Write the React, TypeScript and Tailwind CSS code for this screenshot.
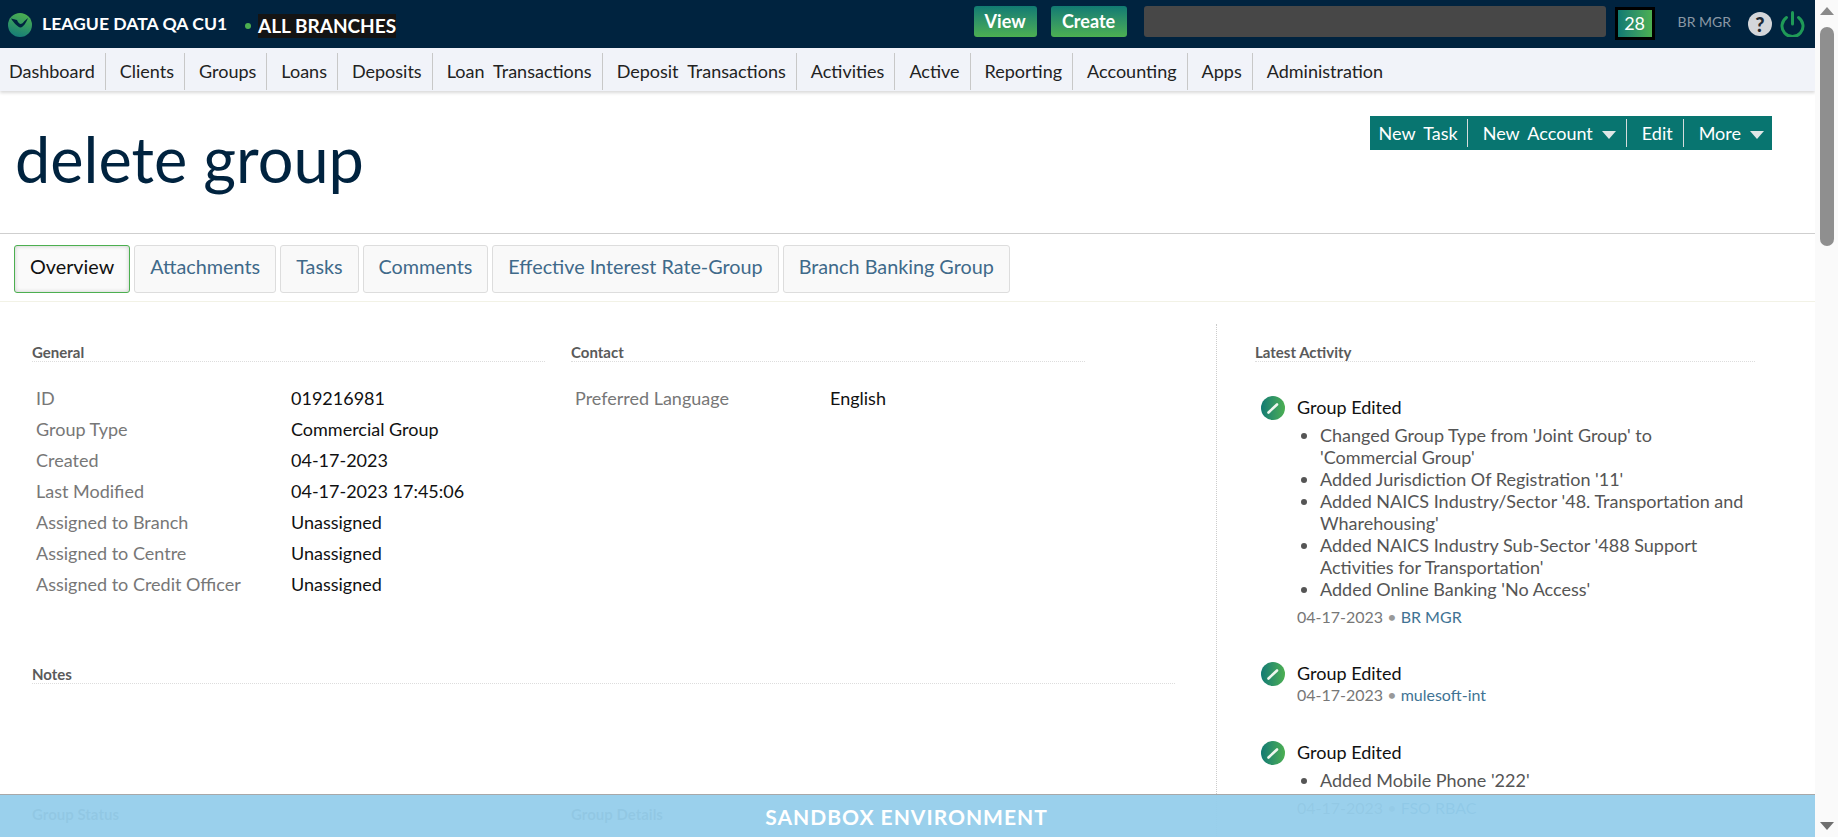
import React from "react";

const nav = ["Dashboard", "Clients", "Groups", "Loans", "Deposits", "Loan Transactions", "Deposit Transactions", "Activities", "Active", "Reporting", "Accounting", "Apps", "Administration"];
const tabs = ["Attachments", "Tasks", "Comments", "Effective Interest Rate-Group", "Branch Banking Group"];
const general: [string, string][] = [
  ["ID", "019216981"],
  ["Group Type", "Commercial Group"],
  ["Created", "04-17-2023"],
  ["Last Modified", "04-17-2023 17:45:06"],
  ["Assigned to Branch", "Unassigned"],
  ["Assigned to Centre", "Unassigned"],
  ["Assigned to Credit Officer", "Unassigned"],
];

function Caret() {
  return <span className="mt-[3px] ml-[9px] inline-block h-0 w-0 border-x-[7px] border-t-[8px] border-x-transparent border-t-[#dfe6e6] align-middle" />;
}

function SectionTitle({ children, className = "" }: { children: React.ReactNode; className?: string }) {
  return (
    <div className={`h-[19px] border-b border-dotted border-[#dddddd] text-[15px] leading-[18px] font-bold text-[#5a5a5a] ${className}`}>{children}</div>
  );
}

function EditBadge() {
  return (
    <span className="flex h-6 w-6 shrink-0 items-center justify-center rounded-full bg-gradient-to-r from-[#107a72] to-[#4caf50]">
      <svg width="14" height="14" viewBox="0 0 14 14">
        <path d="M2.5 11.5 L11 3.5" stroke="#eef6ee" strokeWidth="2.6" strokeLinecap="round" />
      </svg>
    </span>
  );
}

function Activity({ items, date, user, mt }: { items?: string[]; date: string; user: string; mt: string }) {
  return (
    <div className={`flex gap-3 pl-[6px] ${mt}`}>
      <EditBadge />
      <div className="min-w-0 flex-1">
        <div className="-mt-px text-[18px] leading-6 text-[#111111]">Group Edited</div>
        {items && (
          <ul className="mt-[5px] list-disc pl-[23px] text-[18px] leading-[22px] text-[#555555]">
            {items.map((t) => (
              <li key={t}>{t}</li>
            ))}
          </ul>
        )}
        <div className={`${items ? "mt-[7px]" : "mt-0"} text-[16px] leading-5 text-[#777777]`}>
          {date} <span className="text-[#999999]">•</span> <span className="text-[#3f7394]">{user}</span>
        </div>
      </div>
    </div>
  );
}

export default function App() {
  return (
    <div className="flex h-[837px] w-[1838px] overflow-hidden bg-white [font-family:Lato,'Noto_Sans',sans-serif]">
      <div className="relative h-full w-[1815px] shrink-0 overflow-hidden">
        <header className="flex h-12 items-center bg-[#00233f]">
          <svg className="mt-[1px] ml-2 shrink-0" width="24" height="24" viewBox="0 0 24 24">
            <defs>
              <linearGradient id="lg" x1="0.6" y1="0" x2="0.3" y2="1">
                <stop offset="0" stopColor="#4caf50" />
                <stop offset="1" stopColor="#157c78" />
              </linearGradient>
            </defs>
            <circle cx="12" cy="12" r="12" fill="url(#lg)" />
            <path d="M3 5.5 C6 10 9.5 14 12.5 14.5 C15.5 14 18 10 20 5 L16.5 8 C15 10 14 11 12.5 11 C11 10.5 9.5 8.5 9 7 Z" fill="#00233f" />
          </svg>
          <span className="ml-[10px] w-[185px] text-[17.6px] font-bold whitespace-nowrap text-white">LEAGUE DATA QA CU1</span>
          <span className="mt-[3px] ml-[18px] h-[6px] w-[6px] rounded-full bg-[#4caf50]" />
          <span className="mt-[3px] ml-[7px] bg-[#141414] text-[19px] leading-[24px] font-bold whitespace-nowrap text-white">ALL BRANCHES</span>
          <div className="mb-[5px] ml-auto flex h-[31px] w-[63px] items-center justify-center rounded-[3px] bg-gradient-to-b from-[#107a72] to-[#4caf50] text-[18px] font-bold text-white">View</div>
          <div className="mb-[5px] ml-[14px] flex h-[31px] w-[76px] items-center justify-center rounded-[3px] bg-gradient-to-b from-[#107a72] to-[#4caf50] text-[18px] font-bold text-white">Create</div>
          <div className="mb-[5px] ml-[17px] h-[31px] w-[462px] rounded-[3px] bg-[#474747]" />
          <div className="mb-[2px] ml-[9px] flex h-[33px] w-[40px] items-center justify-center border-[3px] border-black bg-gradient-to-r from-[#107a72] to-[#4caf50] text-[18px] text-white">28</div>
          <span className="mb-[5px] ml-[23px] text-[14px] text-[#8a98a5]">BR MGR</span>
          <span className="mr-[2px] ml-[17px] flex h-[24px] w-[24px] items-center justify-center rounded-full bg-[#d4d6da] text-[20px] font-black text-[#1f2a35]">?</span>
          <svg className="mt-[-1px] ml-[6px]" width="25" height="26" viewBox="0 0 25 26" fill="none" stroke="#1f9a57" strokeWidth="3" strokeLinecap="round">
            <path d="M12.5 1.5 V13" />
            <path d="M6.5 6.5 A10.5 10.5 0 1 0 18.5 6.5" />
          </svg>
          <span className="w-[10px]" />
        </header>

        <nav className="flex h-[43px] items-center bg-[#f1f3f9] pt-[3px] shadow-[0_2px_3px_rgba(0,0,0,0.15)] [word-spacing:4.6px]">
          {nav.map((n, i) => (
            <div key={n} className={`flex h-[37px] items-center text-[18px] text-[#222222] ${i === 0 ? "pr-[10px] pl-[9px]" : "border-l border-[#c8c8c8] pr-[10px] pl-[14px]"}`}>
              {n}
            </div>
          ))}
        </nav>

        <section className="flex h-[143px] justify-between border-b border-[#cfcfcf]">
          <h1 className="mt-[30px] ml-[15px] text-[63px] leading-[76px] font-normal text-[#00233f]">delete group</h1>
          <div className="mt-[25px] mr-[43px] flex h-[34px] items-center self-start bg-[#087570] text-[18px] text-white [word-spacing:4px]">
            <span className="flex h-[28px] items-center border-r border-[#d5dcdc] px-[9px]">New Task</span>
            <span className="flex h-[28px] items-center border-r border-[#d5dcdc] pr-[10px] pl-[15px]">New Account<Caret /></span>
            <span className="flex h-[28px] items-center border-r border-[#d5dcdc] pr-[10px] pl-[15px]">Edit</span>
            <span className="flex h-[28px] items-center pr-[8px] pl-[15px]">More<Caret /></span>
          </div>
        </section>

        <div className="flex h-[68px] items-start gap-[4px] border-b border-[#f2f2e6] pt-[11px] pl-[14px]">
          <div className="flex h-[48px] items-center rounded-[3px] border border-[#4caf50] bg-[#fafafa] px-[15px] pb-[4px] text-[19.8px] text-[#111111] shadow-[inset_0_0_4px_rgba(0,0,0,0.2)]">Overview</div>
          {tabs.map((t) => (
            <div key={t} className="flex h-[48px] items-center rounded-[3px] border border-[#dddddd] bg-[#f9f9f9] px-[15px] pb-[4px] text-[19.8px] text-[#3f6a8a]">{t}</div>
          ))}
        </div>

        <div className="flex">
          <div className="w-[1216px] shrink-0 pt-[41px] pl-[32px]">
            <div className="flex">
              <div className="w-[513px]">
                <SectionTitle>General</SectionTitle>
                <div className="mt-[21px] pl-[4px]">
                  {general.map(([k, v]) => (
                    <div key={k} className="flex h-[31px] items-center text-[18px]">
                      <span className="w-[255px] text-[#777777]">{k}</span>
                      <span className="text-[#111111]">{v}</span>
                    </div>
                  ))}
                </div>
              </div>
              <div className="ml-[26px] w-[514px]">
                <SectionTitle>Contact</SectionTitle>
                <div className="mt-[21px] pl-[4px]">
                  <div className="flex h-[31px] items-center text-[18px]">
                    <span className="w-[255px] text-[#777777]">Preferred Language</span>
                    <span className="text-[#111111]">English</span>
                  </div>
                </div>
              </div>
            </div>
            <SectionTitle className="mt-[65px] w-[1143px]">Notes</SectionTitle>
            <div className="mt-[121px] flex">
              <div className="w-[539px] text-[15px] leading-[18px] font-bold text-[#5a5a5a]">Group Status</div>
              <div className="text-[15px] leading-[18px] font-bold text-[#5a5a5a]">Group Details</div>
            </div>
          </div>
          <div className="mt-[22px] h-[600px] flex-1 border-l border-dotted border-[#cccccc] pt-[19px] pl-[38px]">
            <SectionTitle className="w-[500px]">Latest Activity</SectionTitle>
            <div className="w-[495px]">
              <Activity
                mt="mt-[34px]"
                items={[
                  "Changed Group Type from 'Joint Group' to 'Commercial Group'",
                  "Added Jurisdiction Of Registration '11'",
                  "Added NAICS Industry/Sector '48. Transportation and Wharehousing'",
                  "Added NAICS Industry Sub-Sector '488 Support Activities for Transportation'",
                  "Added Online Banking 'No Access'",
                ]}
                date="04-17-2023"
                user="BR MGR"
              />
              <Activity mt="mt-[35px]" date="04-17-2023" user="mulesoft-int" />
              <Activity mt="mt-[36px]" items={["Added Mobile Phone '222'"]} date="04-17-2023" user="FSO RBAC" />
            </div>
          </div>
        </div>

        <div className="absolute inset-x-0 bottom-0 flex h-[43px] items-center justify-center border-t border-[#a8a8a8] bg-[#95cdeb]/95 pt-[1px] pr-[2px] text-[21px] font-bold tracking-[1px] text-white">
          SANDBOX ENVIRONMENT
        </div>
      </div>

      <aside className="flex w-[23px] flex-col items-center bg-[#fafafa] pt-[7px] pb-[7px] pl-[1px]">
        <span className="h-0 w-0 border-x-[7px] border-b-[8px] border-x-transparent border-b-[#8a8a8a]" />
        <span className="mt-[12px] h-[219px] w-[14px] rounded-[7px] bg-[#8f8f8f]" />
        <span className="mt-auto h-0 w-0 border-x-[7px] border-t-[8px] border-x-transparent border-t-[#6f6f6f]" />
      </aside>
    </div>
  );
}
